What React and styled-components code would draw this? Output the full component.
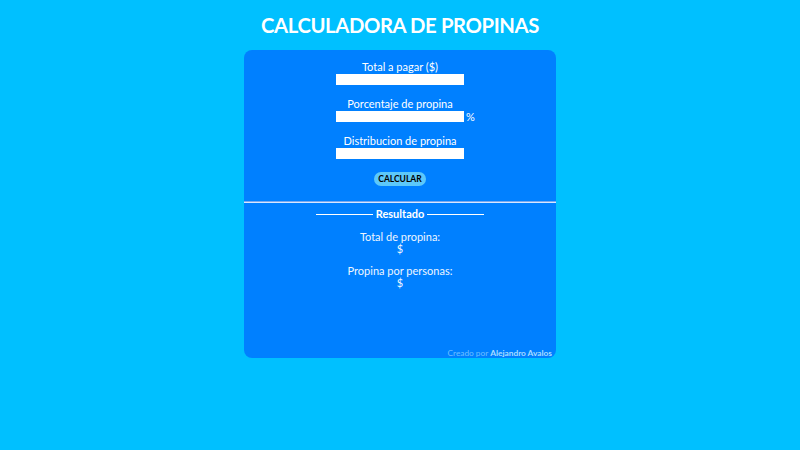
import React from 'react';
import styled, { createGlobalStyle } from 'styled-components';

const GlobalStyle = createGlobalStyle`
  html, body {
    margin: 0;
    padding: 0;
    background-color: #00c0ff;
    font-family: Lato, "Open Sans", sans-serif;
  }
`;

const Page = styled.div`
  width: 800px;
  height: 450px;
  display: flex;
  flex-direction: column;
  align-items: center;
`;

const Title = styled.h1`
  margin: 10px 0 0;
  height: 40px;
  line-height: 30px;
  font-size: 20.3px;
  font-weight: 700;
  letter-spacing: -0.4px;
  color: #ffffff;
`;

const Card = styled.div`
  width: 312px;
  height: 308px;
  background-color: #0080ff;
  border-radius: 8px;
  display: flex;
  flex-direction: column;
  align-items: center;
  padding-top: 10px;
  box-sizing: border-box;
  position: relative;
`;

const Field = styled.div`
  display: flex;
  flex-direction: column;
  align-items: center;
  margin-bottom: 12px;
`;

const Label = styled.label`
  font-size: 11px;
  line-height: 14px;
  color: #ffffff;
`;

const InputWrap = styled.div`
  position: relative;
`;

const Input = styled.input`
  display: block;
  width: 128px;
  height: 11px;
  padding: 0;
  margin: 0;
  border: none;
  background: #ffffff;
  outline: none;
`;

const Suffix = styled.span`
  position: absolute;
  left: 130px;
  top: -1px;
  font-size: 11px;
  line-height: 13px;
  color: #ffffff;
`;

const Button = styled.button`
  margin-top: 1px;
  width: 52px;
  height: 14px;
  padding: 0;
  border: none;
  border-radius: 7px;
  background-color: #5cc8fa;
  color: #000000;
  font-family: inherit;
  font-size: 8.5px;
  font-weight: 700;
  line-height: 14px;
`;

const Divider = styled.hr`
  width: 100%;
  margin: 15px 0 0;
  border: none;
  border-top: 1px solid #7aa9f0;
  border-bottom: 1px solid #d9e6ff;
`;

const ResultHeading = styled.h2`
  margin: 4px 0 0;
  display: flex;
  align-items: center;
  gap: 3px;
  font-size: 11px;
  line-height: 14px;
  font-weight: 700;
  color: #ffffff;

  &::before,
  &::after {
    content: '';
    width: 57px;
    height: 1px;
    background-color: #ffffff;
  }
`;

const Result = styled.div`
  margin-top: ${props => props.$top}px;
  display: flex;
  flex-direction: column;
  align-items: center;
  font-size: 11px;
  line-height: 11.5px;
  color: #eef6ff;
`;

const Credit = styled.div`
  position: absolute;
  right: 4px;
  bottom: 0px;
  font-size: 8.3px;
  line-height: 10px;
  color: #6fbfff;

  b {
    font-weight: 700;
    color: #a8dcff;
  }
`;

const App = () => {
    return (
        <Page>
            <GlobalStyle />
            <Title>CALCULADORA DE PROPINAS</Title>
            <Card>
                <Field>
                    <Label>Total a pagar ($)</Label>
                    <Input type="text" />
                </Field>
                <Field>
                    <Label>Porcentaje de propina</Label>
                    <InputWrap>
                        <Input type="text" />
                        <Suffix>%</Suffix>
                    </InputWrap>
                </Field>
                <Field>
                    <Label>Distribucion de propina</Label>
                    <Input type="text" />
                </Field>
                <Button>CALCULAR</Button>
                <Divider />
                <ResultHeading>Resultado</ResultHeading>
                <Result $top={10}>
                    <span>Total de propina:</span>
                    <span>$</span>
                </Result>
                <Result $top={11}>
                    <span>Propina por personas:</span>
                    <span>$</span>
                </Result>
                <Credit>Creado por <b>Alejandro Avalos</b></Credit>
            </Card>
        </Page>
    );
};

export default App;
